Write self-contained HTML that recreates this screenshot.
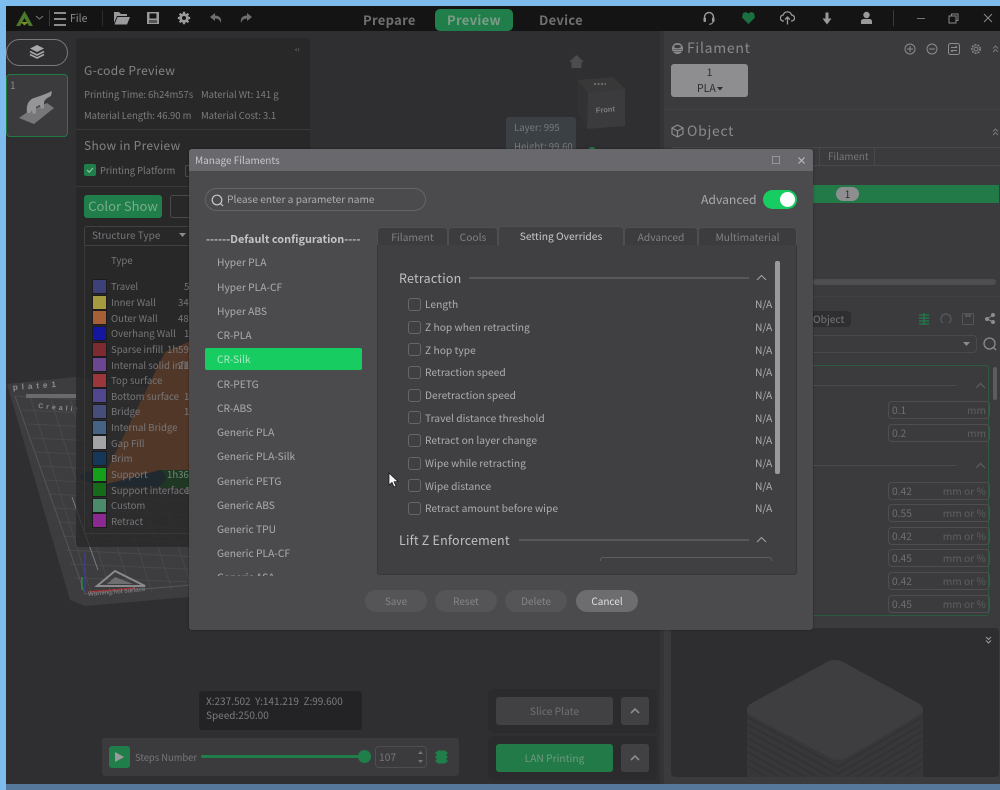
<!DOCTYPE html>
<html><head><meta charset="utf-8"><style>
html,body{margin:0;padding:0;background:#2f2f31}
#r{position:relative;width:1000px;height:790px;overflow:hidden;background:#2f2f31;font-family:"Noto Sans CJK SC","Liberation Sans",sans-serif;font-size:10px;color:#8c8c8e}
#r div{position:absolute;box-sizing:border-box}
.t{white-space:nowrap;line-height:14px}
.p{font-size:9.5px;letter-spacing:-.04px;color:#7c7c7e}
.li{left:217px;font-size:10.25px;color:#adadaf;white-space:nowrap;line-height:14px}
.o{left:425px;font-size:10.25px;color:#adadaf;white-space:nowrap;line-height:14px}
.na{left:755px;font-size:10.25px;color:#adadaf;line-height:14px}
.cb{left:408px;width:13px;height:13px;border:1px solid #666668;border-radius:3px}
.sw{left:92px;width:15px;height:15px;border:1px solid #1c1c1e}
.lg{left:111px;font-size:9.6px;color:#77777a;white-space:nowrap;line-height:14px}
.inp{left:888px;width:102px;height:18px;border:1px solid #4e4e50;border-radius:4px;font-size:10.25px;color:#6f6f71;line-height:16px;padding-left:3px}
.inp span{position:absolute;right:3px;top:0;color:#5e5e60}
.tab{top:227px;height:18px;background:#3c3c3e;border:1px solid #4f4f51;border-bottom:0;border-radius:4px 4px 0 0;font-size:10.25px;color:#818183;text-align:center;line-height:17px}
.btn{top:590px;width:62px;height:22px;background:#555557;border-radius:11px;font-size:10px;color:#858587;text-align:center;line-height:22px}
svg{position:absolute}
</style></head><body><div id="r">

<!-- window frame -->
<div style="left:0;top:0;width:1000px;height:6px;background:#7fbcee"></div>
<div style="left:0;top:0;width:6px;height:790px;background:#7fbcee"></div>
<div style="left:6px;top:6px;width:994px;height:25px;background:#141415"></div>
<div style="left:6px;top:784px;width:994px;height:6px;background:#56789a"></div>
<div style="left:0;top:784px;width:6px;height:6px;background:#7fbcee"></div>

<!-- 3D plate -->
<svg style="left:0;top:0" width="400" height="640" viewBox="0 0 400 640">
<polygon points="7,384 75,377 240,400 270,590 85,606 70,600" fill="#3d3d3f"/>
<g stroke="#49494b" stroke-width="1" fill="none">
<path d="M15,396 L230,408 M22,410 L232,420 M28,424 L234,434 M32,438 L236,448 M36,452 L238,462 M41,466 L240,476 M45,480 L242,490 M50,494 L244,504 M54,508 L246,518 M58,522 L248,532 M62,536 L250,546 M66,550 L252,560 M70,564 L254,572 M74,578 L256,584"/>
<path d="M30,396 L92,596 M50,396 L112,596 M70,398 L132,594 M90,398 L152,592 M110,400 L172,590 M130,400 L192,588"/>
</g>
<path d="M15,396 L85,594 L250,580" stroke="#555557" fill="none"/>
<path d="M72,497 L98,570" stroke="#7c7c7e" fill="none"/>
<path d="M85,553 V592" stroke="#3d3ea0" stroke-width="1.2" fill="none"/>
<path d="M82,577 v13" stroke="#2f9a40" stroke-width="1.2" fill="none"/>
<path d="M88,592 L135,588" stroke="#aa3030" stroke-width="1.2" fill="none"/>
<polygon points="115,571 97,586 145,586" fill="none" stroke="#8a8a8c" stroke-width="2"/>
<polygon points="115,577 107,584 133,584" fill="#6e6e70"/>
<text x="13" y="390" font-size="8" fill="#8e8e90" font-family="Liberation Sans" font-weight="700" letter-spacing="4" transform="rotate(-4 13 390)">plate1</text>
<text x="38" y="408" font-size="7" fill="#8e8e90" font-family="Liberation Sans" font-weight="700" letter-spacing="3" transform="rotate(5 38 408)">Crealit</text>
<rect x="26" y="394" width="50" height="4" fill="#6a6a6c"/>
<text x="88" y="596" font-size="6.5" fill="#8a8a8c" font-family="Liberation Sans" transform="rotate(-5 88 596)">Warning:hot surface</text>
<ellipse cx="140" cy="477" rx="60" ry="10" fill="#12304a"/>
<path d="M157,468 Q200,462 230,470 L230,486 Q190,490 157,487 Q175,478 157,468Z" fill="#0f6a1e"/>
<path d="M107,484 L105,474 L165,352 L240,320 L240,470 L160,470Z" fill="#c0642c"/>
</svg>

<!-- thumbnails -->
<div style="left:6px;top:39px;width:62px;height:27px;border:1px solid #7a7a7c;border-radius:14px"></div>
<svg style="left:28px;top:44px" width="18" height="17" viewBox="0 0 18 17"><path d="M9,1 L16,4.5 L9,8 L2,4.5Z" fill="#a8a8aa"/><path d="M2,7.5 L9,11 L16,7.5 M2,10.5 L9,14 L16,10.5" stroke="#a8a8aa" stroke-width="1.6" fill="none"/></svg>
<div style="left:6px;top:74px;width:62px;height:63px;background:#3b3b3d;border:1px solid #1f7a44;border-radius:4px"></div>
<div class="t" style="left:10px;top:78px;color:#8a8a8c">1</div>
<svg style="left:0;top:80px" width="70" height="50" viewBox="0 80 70 50"><polygon points="19,118 34,124 54,108 47,103 26,113" fill="#777779"/><path d="M27,113 C26,106 28,100 34,98 C40,96 46,94 52,91 L51,96 C47,98 44,100 44,103 L44,108 L41,109 L40,105 L36,107 L36,113 L33,114 L32,110 L30,113Z" fill="#959597"/></svg>

<!-- top bar -->
<svg style="left:16px;top:11px" width="17" height="15" viewBox="0 0 17 15"><path d="M8.5,0 L17,15 H13 L8.5,7 L4,15 H0Z" fill="#4a7a2a"/><path d="M4.5,11 H12.5 L8.5,14.5Z" fill="#7f8e24"/></svg>
<svg style="left:35px;top:15px" width="9" height="6"><path d="M1,1 L4.5,4 L8,1" stroke="#7c7c7e" fill="none"/></svg>
<div style="left:49px;top:10px;width:1px;height:16px;background:#3a3a3c"></div>
<div style="left:54px;top:12px;width:12px;height:1.5px;background:#8c8c8e"></div>
<div style="left:54px;top:18px;width:12px;height:1.5px;background:#8c8c8e"></div>
<div style="left:54px;top:24px;width:12px;height:1.5px;background:#8c8c8e"></div>
<div class="t" style="left:70px;top:12px;font-size:10.5px;color:#8c8c8e">File</div>
<div style="left:102px;top:10px;width:1px;height:16px;background:#2d2d2f"></div>
<svg style="left:113px;top:11px" width="18" height="14" viewBox="0 0 18 14"><path d="M1,1 h5 l2,2 h6 v2 H4 L1,12Z" fill="#9a9a9c"/><path d="M4.5,6 H17 L14,13.5 H1.5Z" fill="#9a9a9c"/></svg>
<svg style="left:146px;top:11px" width="14" height="14" viewBox="0 0 14 14"><path d="M1,1 H13 V13 H1Z" fill="#9a9a9c"/><rect x="3.5" y="2.5" width="7" height="5" fill="#141415"/><rect x="3" y="9" width="8" height="3" fill="#555"/></svg>
<svg style="left:177px;top:11px" width="14" height="14" viewBox="0 0 14 14"><circle cx="7" cy="7" r="3.6" fill="none" stroke="#9a9a9c" stroke-width="2.4"/><path d="M7,0.8 V13.2 M0.8,7 H13.2 M2.6,2.6 L11.4,11.4 M11.4,2.6 L2.6,11.4" stroke="#9a9a9c" stroke-width="2.2"/><circle cx="7" cy="7" r="2" fill="#141415"/></svg>
<svg style="left:209px;top:12px" width="14" height="12" viewBox="0 0 14 12"><path d="M6,1 L1,5 L6,9 V6.5 C9,6.5 11,8 12,11 C13,6 10,3.5 6,3.5Z" fill="#6e6e70"/></svg>
<svg style="left:239px;top:12px" width="14" height="12" viewBox="0 0 14 12"><path d="M8,1 L13,5 L8,9 V6.5 C5,6.5 3,8 2,11 C1,6 4,3.5 8,3.5Z" fill="#6e6e70"/></svg>

<div class="t" style="left:363px;top:11px;font-size:13px;font-weight:700;color:#6f6f71;line-height:18px;letter-spacing:.3px">Prepare</div>
<div style="left:435px;top:9px;width:78px;height:22px;background:#1f7e49;border-radius:5px;font-size:13px;font-weight:700;color:#7c9c88;text-align:center;line-height:22px;letter-spacing:.3px">Preview</div>
<div class="t" style="left:539px;top:11px;font-size:13px;font-weight:700;color:#6f6f71;line-height:18px;letter-spacing:.3px">Device</div>

<svg style="left:702px;top:11px" width="14" height="14" viewBox="0 0 14 14"><path d="M2.5,8 V6 a4.5,4.5 0 0 1 9,0 V8" stroke="#9a9a9c" stroke-width="1.4" fill="none"/><rect x="1.5" y="6.5" width="2.5" height="4.5" rx="1" fill="#9a9a9c"/><rect x="10" y="6.5" width="2.5" height="4.5" rx="1" fill="#9a9a9c"/><path d="M11,11 Q10,13.3 7,13.3" stroke="#9a9a9c" fill="none"/></svg>
<svg style="left:741px;top:11px" width="15" height="13" viewBox="0 0 15 13"><path d="M7.5,13 L1,6.5 L2,2 L5,1 L7.5,2.5 L10,1 L13,2 L14,6.5Z" fill="#1c6f41"/></svg>
<svg style="left:780px;top:11px" width="15" height="14" viewBox="0 0 15 14"><path d="M4,10 H3.5 a3,3 0 0 1 -.3,-6 a4.4,4.4 0 0 1 8.4,0 a3,3 0 0 1 -.1,6 H11" stroke="#9a9a9c" stroke-width="1.3" fill="none"/><path d="M7.5,13.5 V6.5 M5,8.5 L7.5,6 L10,8.5" stroke="#9a9a9c" stroke-width="1.3" fill="none"/></svg>
<svg style="left:821px;top:12px" width="12" height="13" viewBox="0 0 12 13"><path d="M4.5,0.5 h3 v6 h3 L6,12.5 L1.5,6.5 h3Z" fill="#9a9a9c"/></svg>
<svg style="left:860px;top:11px" width="13" height="14" viewBox="0 0 13 14"><circle cx="6.5" cy="4" r="3.2" fill="#9a9a9c"/><path d="M1,13 V10.5 Q1,8 4,8 H9 Q12,8 12,10.5 V13Z" fill="#9a9a9c"/></svg>
<div style="left:893px;top:10px;width:1px;height:16px;background:#3a3a3c"></div>
<div style="left:917px;top:18px;width:8px;height:1px;background:#77777a"></div>
<svg style="left:948px;top:13px" width="11" height="11"><path d="M3.5,2.5 V1 H10 V7.5 H8.5" stroke="#8a8a8c" fill="none"/><rect x="1" y="3" width="7" height="7" stroke="#8a8a8c" fill="none"/></svg>
<svg style="left:983px;top:13px" width="10" height="10"><path d="M1,1 L9,9 M9,1 L1,9" stroke="#8a8a8c"/></svg>

<!-- left panel -->
<div style="left:76px;top:38px;width:234px;height:509px;background:rgba(37,37,39,.72);border-radius:3px"></div>
<div class="t" style="left:295px;top:43px;font-size:8px;color:#77777a">‹‹</div>
<div class="t" style="left:84px;top:62px;font-size:12px;color:#838385;line-height:17px;letter-spacing:.3px">G-code Preview</div>
<div class="t p" style="left:84px;top:87px">Printing Time: 6h24m57s</div>
<div class="t p" style="left:201px;top:87px">Material Wt: 141 g</div>
<div class="t p" style="left:84px;top:108px">Material Length: 46.90 m</div>
<div class="t p" style="left:201px;top:108px">Material Cost: 3.1</div>
<div style="left:76px;top:129px;width:234px;height:1px;background:#39393b"></div>
<div class="t" style="left:84px;top:137px;font-size:12px;color:#838385;line-height:18px;letter-spacing:.3px">Show in Preview</div>
<div style="left:84px;top:164px;width:12px;height:12px;background:#1f7e49;border-radius:2px"></div>
<svg style="left:84px;top:164px" width="12" height="12"><path d="M3,6 L5.2,8.2 L9,4" stroke="#9ac4aa" stroke-width="1.1" fill="none"/></svg>
<div class="t" style="left:100px;top:163px;color:#7c7c7e;font-size:9.4px">Printing Platform</div>
<div style="left:185px;top:165px;width:12px;height:12px;border:1px solid #4a4a4c;border-radius:2px"></div>
<div style="left:76px;top:186px;width:234px;height:1px;background:#39393b"></div>
<div style="left:84px;top:195px;width:78px;height:23px;background:#1f7e49;border-radius:3px;font-size:13px;color:#7cab8e;text-align:center;line-height:21px">Color Show</div>
<div style="left:170px;top:195px;width:40px;height:23px;border:1px solid #4a4a4c;border-radius:3px"></div>
<div style="left:84px;top:226px;width:220px;height:20px;border:1px solid #414143;border-radius:3px 3px 0 0"></div>
<div class="t" style="left:92px;top:228px;font-size:10px;color:#77777a">Structure Type</div>
<svg style="left:179px;top:233px" width="7" height="5"><path d="M0,0 H7 L3.5,4Z" fill="#8a8a8c"/></svg>
<div style="left:84px;top:245px;width:220px;height:289px;border:1px solid #38383a;border-top:0"></div>
<div class="t" style="left:111px;top:253px;color:#77777a;font-size:9.6px">Type</div>

<div class="sw" style="top:279px;background:#3e4178"></div><div class="lg" style="top:279px">Travel</div><div class="lg" style="left:184px;top:279px">5</div>
<div class="sw" style="top:295px;background:#a59a40"></div><div class="lg" style="top:295px">Inner Wall</div><div class="lg" style="left:178px;top:295px">34</div>
<div class="sw" style="top:310px;background:#a65f36"></div><div class="lg" style="top:311px">Outer Wall</div><div class="lg" style="left:178px;top:311px">48</div>
<div class="sw" style="top:326px;background:#1516a0"></div><div class="lg" style="top:326px">Overhang Wall</div><div class="lg" style="left:184px;top:326px">1</div>
<div class="sw" style="top:342px;background:#7c2c30"></div><div class="lg" style="top:342px">Sparse infill</div><div class="lg" style="left:167px;top:342px">1h59</div>
<div class="sw" style="top:357px;background:#6c4690"></div><div class="lg" style="top:358px">Internal solid infill</div><div class="lg" style="left:178px;top:358px">21</div>
<div class="sw" style="top:373px;background:#9a363c"></div><div class="lg" style="top:373px">Top surface</div>
<div class="sw" style="top:388px;background:#50478e"></div><div class="lg" style="top:389px">Bottom surface</div><div class="lg" style="left:184px;top:389px">1</div>
<div class="sw" style="top:404px;background:#444e78"></div><div class="lg" style="top:404px">Bridge</div><div class="lg" style="left:184px;top:404px">1</div>
<div class="sw" style="top:420px;background:#466284"></div><div class="lg" style="top:420px">Internal Bridge</div>
<div class="sw" style="top:435px;background:#a4a4a6"></div><div class="lg" style="top:436px">Gap Fill</div>
<div class="sw" style="top:451px;background:#15385a"></div><div class="lg" style="top:451px">Brim</div>
<div class="sw" style="top:467px;background:#15a01b"></div><div class="lg" style="top:467px">Support</div><div class="lg" style="left:167px;top:467px;color:#6f8a74">1h36</div>
<div class="sw" style="top:482px;background:#176a1c"></div><div class="lg" style="top:483px">Support interface</div><div class="lg" style="left:185px;top:483px">1</div>
<div class="sw" style="top:498px;background:#4b8a6a"></div><div class="lg" style="top:498px">Custom</div>
<div class="sw" style="top:513px;background:#8a2a90"></div><div class="lg" style="top:514px">Retract</div>

<!-- view cube -->
<svg style="left:560px;top:50px" width="80" height="90" viewBox="560 50 80 90"><path d="M576.5,55 L569,62 H571.5 V68 H581.5 V62 H584Z" fill="#4c4c4e"/><polygon points="577,80 613,77 625,89 588,93" fill="#383839"/><polygon points="577,80 588,93 587,129 577,112" fill="#323234"/><polygon points="588,93 625,89 625,126 587,129" fill="#3b3b3d"/><text x="596" y="113" font-size="7.5" fill="#7c7c7e" font-weight="700" font-family="Liberation Sans" transform="rotate(-5 596 113)">Front</text><path d="M594,84 h12" stroke="#6a6a6c" stroke-width="2" stroke-dasharray="2 1.5"/></svg>
<div style="left:506px;top:117px;width:70px;height:40px;background:#3b4044;border-radius:3px"></div>
<div class="t" style="left:514px;top:120px;color:#77797b;font-size:9.6px">Layer: 995</div>
<div class="t" style="left:514px;top:139px;color:#77797b;font-size:9.6px">Height: 99.60</div>
<div style="left:588px;top:147px;width:8px;height:8px;background:#1f7e49;border-radius:4px"></div>

<!-- right panel -->
<div style="left:664px;top:31px;width:336px;height:753px;background:#3b3b3d"></div>
<div style="left:660px;top:31px;width:4px;height:753px;background:#343436"></div>
<svg style="left:671px;top:42px" width="14" height="13" viewBox="0 0 14 13"><ellipse cx="6.5" cy="6.5" rx="5.5" ry="5.5" fill="#8c8c8e"/><ellipse cx="6.5" cy="4.5" rx="3.5" ry="1.8" fill="#3b3b3d"/><path d="M2,7.5 H11 M2,9.5 H11" stroke="#3b3b3d" stroke-width=".6"/></svg>
<div class="t" style="left:687px;top:39px;font-size:14px;color:#8a8a8c;line-height:19px;letter-spacing:.7px">Filament</div>
<svg style="left:904px;top:43px" width="12" height="12"><circle cx="6" cy="6" r="5" stroke="#8c8c8e" fill="none"/><path d="M3,6 H9 M6,3 V9" stroke="#8c8c8e"/></svg>
<svg style="left:926px;top:43px" width="12" height="12"><circle cx="6" cy="6" r="5" stroke="#8c8c8e" fill="none"/><path d="M3,6 H9" stroke="#8c8c8e"/></svg>
<svg style="left:948px;top:43px" width="12" height="12"><rect x=".5" y=".5" width="11" height="11" rx="2" stroke="#8c8c8e" fill="none"/><path d="M3,4.5 H9 M7.5,3 L9,4.5 M3,7.5 H9 M3,7.5 L4.5,9" stroke="#8c8c8e" fill="none"/></svg>
<svg style="left:970px;top:43px" width="12" height="12" viewBox="0 0 12 12"><circle cx="6" cy="6" r="2" stroke="#8c8c8e" fill="none"/><circle cx="6" cy="6" r="4.2" stroke="#8c8c8e" stroke-width="1.4" fill="none" stroke-dasharray="2 1"/></svg>
<svg style="left:992px;top:45px" width="7" height="8"><path d="M1,3.5 L3.5,1 L6,3.5 M1,7 L3.5,4.5 L6,7" stroke="#77777a" fill="none"/></svg>
<div style="left:671px;top:64px;width:77px;height:33px;background:#8e8e90;border-radius:3px"></div>
<div class="t" style="left:671px;top:66px;width:77px;text-align:center;font-size:10.5px;color:#2c2c2e">1</div>
<div class="t" style="left:697px;top:82px;font-size:10.5px;color:#2c2c2e">PLA</div>
<svg style="left:717px;top:87px" width="6" height="4"><path d="M0,0 H6 L3,3.5Z" fill="#2c2c2e"/></svg>
<div style="left:664px;top:109px;width:336px;height:1px;background:#414143"></div>
<svg style="left:671px;top:124px" width="13" height="14" viewBox="0 0 13 14"><path d="M6.5,1 L12,4 V10 L6.5,13 L1,10 V4Z M1,4 L6.5,7 L12,4 M6.5,7 V13" stroke="#8c8c8e" stroke-width="1.2" fill="none"/></svg>
<div class="t" style="left:687px;top:122px;font-size:14px;color:#8a8a8c;line-height:19px;letter-spacing:.7px">Object</div>
<svg style="left:992px;top:128px" width="7" height="8"><path d="M1,3.5 L3.5,1 L6,3.5 M1,7 L3.5,4.5 L6,7" stroke="#77777a" fill="none"/></svg>
<div style="left:672px;top:147px;width:328px;height:19px;border:1px solid #48484a;border-right:0"></div>
<div style="left:819px;top:147px;width:1px;height:19px;background:#48484a"></div>
<div style="left:874px;top:147px;width:1px;height:19px;background:#48484a"></div>
<div class="t" style="left:828px;top:149px;color:#77777a;font-size:9.8px">Filament</div>
<div style="left:672px;top:185px;width:327px;height:18px;background:#217a48"></div>
<div style="left:836px;top:187px;width:23px;height:14px;background:#8e8e90;border-radius:7px;color:#2c2c2e;text-align:center;font-size:10px;line-height:14px">1</div>
<div style="left:813px;top:279px;width:183px;height:6px;background:#4e4e50;border-radius:3px"></div>
<div style="left:664px;top:296px;width:336px;height:1px;background:#414143"></div>
<div style="left:800px;top:311px;width:51px;height:16px;background:#2f2f31;border-radius:4px"></div>
<div class="t" style="left:813px;top:312px;font-size:10.25px;color:#77777a">Object</div>
<svg style="left:918px;top:313px" width="12" height="12"><path d="M1,2 H11 M1,5 H11 M1,8 H11 M1,11 H11 M6,0 V12" stroke="#1f7e49" stroke-width="1.2"/></svg>
<svg style="left:940px;top:313px" width="12" height="12"><path d="M3,10 A5,5 0 1 1 9,10" stroke="#555557" stroke-width="1.4" fill="none"/></svg>
<svg style="left:962px;top:313px" width="12" height="12"><rect x=".5" y=".5" width="11" height="11" rx="1" stroke="#555557" fill="none"/><rect x="3" y="1" width="6" height="3" fill="#555557"/></svg>
<svg style="left:984px;top:312px" width="12" height="13"><circle cx="3" cy="7" r="2" fill="#8c8c8e"/><circle cx="9" cy="3" r="2" fill="#8c8c8e"/><circle cx="9" cy="10" r="2" fill="#8c8c8e"/><path d="M3,7 L9,3 M3,7 L9,10" stroke="#8c8c8e"/></svg>
<div style="left:800px;top:335px;width:177px;height:18px;border:1px solid #4a4a4c;border-left:0;border-radius:0 4px 4px 0"></div>
<svg style="left:963px;top:342px" width="7" height="5"><path d="M0,0 H7 L3.5,4Z" fill="#8a8a8c"/></svg>
<svg style="left:983px;top:337px" width="14" height="14"><circle cx="6.5" cy="6.5" r="5.5" stroke="#8c8c8e" stroke-width="1.3" fill="none"/><path d="M10.5,10.5 L13,13" stroke="#8c8c8e" stroke-width="1.3"/></svg>
<div style="left:800px;top:365px;width:189px;height:251px;border:1px solid #2c5c40;border-left:0;border-radius:0 3px 3px 0"></div>
<div style="left:993px;top:367px;width:4px;height:33px;background:#5c5c5e;border-radius:2px"></div>
<div style="left:800px;top:385px;width:157px;height:1px;background:#4a4a4c"></div>
<svg style="left:975px;top:382px" width="11" height="7"><path d="M1,6 L5.5,1.5 L10,6" stroke="#5e5e60" stroke-width="1.2" fill="none"/></svg>
<div class="inp" style="top:401px">0.1<span>mm</span></div>
<div class="inp" style="top:424px">0.2<span>mm</span></div>
<div style="left:800px;top:465px;width:157px;height:1px;background:#4a4a4c"></div>
<svg style="left:975px;top:462px" width="11" height="7"><path d="M1,6 L5.5,1.5 L10,6" stroke="#5e5e60" stroke-width="1.2" fill="none"/></svg>
<div class="inp" style="top:482px">0.42<span>mm or %</span></div>
<div class="inp" style="top:504px">0.55<span>mm or %</span></div>
<div class="inp" style="top:527px">0.42<span>mm or %</span></div>
<div class="inp" style="top:549px">0.45<span>mm or %</span></div>
<div class="inp" style="top:572px">0.42<span>mm or %</span></div>
<div class="inp" style="top:595px">0.45<span>mm or %</span></div>

<!-- bottom-right preview -->
<div style="left:671px;top:628px;width:328px;height:149px;background:#2e2e30;border-radius:4px;overflow:hidden">
<svg style="left:0;top:0" width="328" height="149" viewBox="0 0 328 149">
<path d="M76,82 Q76,78 81,75 L156,34 Q164,30 172,34 L247,75 Q252,78 252,82 V149 H76Z" fill="#373739"/>
<path d="M76,82 Q76,78 81,75 L156,34 Q164,30 172,34 L247,75 Q252,78 252,82 Q252,85 247,88 L175,130 Q167,134 159,130 L81,88 Q76,85 76,82Z" fill="#3e3e40"/>
<g stroke="#303032" stroke-width="1" fill="none"><path d="M76,89 L167,139 L252,89 M76,96 L167,146 L252,96 M76,103 L167,153 L252,103 M76,110 L167,160 L252,110 M76,117 L167,167 L252,117 M76,124 L167,174 L252,124 M76,131 L167,181 L252,131 M76,138 L167,188 L252,138"/></g>
</svg></div>
<svg style="left:985px;top:636px" width="7" height="8"><path d="M1,1 L3.5,3.5 L6,1 M1,4.5 L3.5,7 L6,4.5" stroke="#9a9a9c" fill="none"/></svg>

<!-- right-center buttons -->
<div style="left:488px;top:689px;width:169px;height:44px;background:#2b2b2d;border-radius:6px"></div>
<div style="left:488px;top:736px;width:169px;height:44px;background:#2b2b2d;border-radius:6px"></div>
<div style="left:496px;top:697px;width:117px;height:28px;background:#414143;border-radius:3px;font-size:10.25px;color:#727274;text-align:center;line-height:28px">Slice Plate</div>
<div style="left:621px;top:697px;width:28px;height:28px;background:#414143;border-radius:3px"></div>
<svg style="left:630px;top:707px" width="10" height="7"><path d="M1,6 L5,2 L9,6" stroke="#8c8c8e" stroke-width="1.6" fill="none"/></svg>
<div style="left:496px;top:744px;width:117px;height:28px;background:#217a48;border-radius:3px;font-size:10.25px;color:#6f9a80;text-align:center;line-height:28px">LAN Printing</div>
<div style="left:621px;top:744px;width:28px;height:28px;background:#414143;border-radius:3px"></div>
<svg style="left:630px;top:754px" width="10" height="7"><path d="M1,6 L5,2 L9,6" stroke="#8c8c8e" stroke-width="1.6" fill="none"/></svg>

<!-- bottom-left -->
<div style="left:199px;top:691px;width:163px;height:39px;background:#232325;border-radius:3px"></div>
<div class="t" style="left:206px;top:694px;color:#7c7c7e">X:237.502&nbsp; Y:141.219&nbsp; Z:99.600</div>
<div class="t" style="left:206px;top:708px;color:#7c7c7e">Speed:250.00</div>
<div style="left:102px;top:738px;width:357px;height:38px;background:#3b3b3d;border-radius:3px"></div>
<div style="left:109px;top:746px;width:21px;height:22px;background:#1f7e49;border-radius:3px"></div>
<svg style="left:115px;top:752px" width="9" height="10"><path d="M0,0 L9,5 L0,10Z" fill="#9a9a9c"/></svg>
<div class="t" style="left:135px;top:750px;color:#77777a;font-size:9.4px">Steps Number</div>
<div style="left:201px;top:755px;width:164px;height:3px;background:#1f7e49;border-radius:2px"></div>
<div style="left:358px;top:750px;width:13px;height:13px;background:#1f7e49;border-radius:50%"></div>
<div style="left:375px;top:746px;width:52px;height:22px;border:1px solid #4e4e50;border-radius:4px"></div>
<div class="t" style="left:379px;top:750px;color:#77777a;font-size:10.25px">107</div>
<svg style="left:417px;top:750px" width="7" height="14"><path d="M1,4 L3.5,1 L6,4Z M1,10 L3.5,13 L6,10Z" fill="#77777a"/></svg>
<svg style="left:435px;top:750px" width="13" height="14"><path d="M3,0.5 H10 L13,3 L11,5 L13,7 L11,9 L13,11 L10,13.5 H3 L0,11 L2,9 L0,7 L2,5 L0,3Z" fill="#1f7e49"/></svg>

<!-- dialog -->
<div style="left:189px;top:149px;width:624px;height:481px;background:#4b4b4d;border-radius:3px;box-shadow:0 0 2px rgba(0,0,0,.4)"></div>
<div style="left:189px;top:149px;width:624px;height:22px;background:#69686c;border-radius:3px 3px 0 0"></div>
<div class="t" style="left:195px;top:153px;font-size:10px;color:#c8c8ca">Manage Filaments</div>
<div style="left:772px;top:156px;width:8px;height:8px;border:1px solid #97979a"></div>
<svg style="left:798px;top:157px" width="7" height="7"><path d="M.5,.5 L6.5,6.5 M6.5,.5 L.5,6.5" stroke="#c0c0c2"/></svg>

<div style="left:205px;top:188px;width:221px;height:23px;border:1px solid #656567;border-radius:12px"></div>
<svg style="left:211px;top:194px" width="13" height="13"><circle cx="6" cy="6" r="4.8" stroke="#c8c8ca" stroke-width="1.2" fill="none"/><path d="M9.5,9.5 L12,12" stroke="#c8c8ca" stroke-width="1.2"/></svg>
<div class="t" style="left:227px;top:192px;font-size:10.2px;color:#aeaeb0">Please enter a parameter name</div>
<div class="t" style="left:701px;top:191px;font-size:12.2px;color:#a9a9ab;line-height:16px">Advanced</div>
<div style="left:763px;top:190px;width:34px;height:19px;background:#17cc60;border-radius:10px"></div>
<div style="left:780px;top:192px;width:15px;height:15px;background:#fff;border-radius:50%"></div>

<div class="t" style="left:206px;top:232px;font-size:10.9px;font-weight:700;color:#c4c4c6">------Default configuration----</div>
<div class="li" style="top:255px">Hyper PLA</div>
<div class="li" style="top:280px">Hyper PLA-CF</div>
<div class="li" style="top:304px">Hyper ABS</div>
<div class="li" style="top:328px">CR-PLA</div>
<div style="left:205px;top:348px;width:157px;height:22px;background:#17cc60;border-radius:2px"></div>
<div class="li" style="top:352px;color:#aee8c4">CR-Silk</div>
<div class="li" style="top:377px">CR-PETG</div>
<div class="li" style="top:401px">CR-ABS</div>
<div class="li" style="top:425px">Generic PLA</div>
<div class="li" style="top:449px">Generic PLA-Silk</div>
<div class="li" style="top:474px">Generic PETG</div>
<div class="li" style="top:498px">Generic ABS</div>
<div class="li" style="top:522px">Generic TPU</div>
<div class="li" style="top:546px">Generic PLA-CF</div>
<div style="left:205px;top:565px;width:157px;height:10.5px;overflow:hidden"><div class="li" style="left:12px;top:5px">Generic ASA</div></div>

<div style="left:377px;top:244px;width:420px;height:331px;background:#404042;border:1px solid #363638;border-radius:0 0 3px 3px"></div>
<div class="tab" style="left:377px;width:71px">Filament</div>
<div class="tab" style="left:448px;width:50px">Cools</div>
<div style="left:498px;top:226px;width:126px;height:20px;background:#404042;border:1px solid #4f4f51;border-bottom:0;border-radius:4px 4px 0 0;font-size:10.25px;color:#c8c8ca;text-align:center;line-height:17px">Setting Overrides</div>
<div class="tab" style="left:624px;width:74px">Advanced</div>
<div class="tab" style="left:698px;width:99px">Multimaterial</div>

<div class="t" style="left:399px;top:270px;font-size:12.5px;color:#c0c0c2;line-height:16px;letter-spacing:.2px">Retraction</div>
<div style="left:469px;top:277px;width:280px;height:2px;background:#58585a"></div>
<svg style="left:756px;top:274px" width="11" height="7"><path d="M1,6 L5.5,1.5 L10,6" stroke="#a0a0a2" stroke-width="1.1" fill="none"/></svg>
<div style="left:775px;top:261px;width:5px;height:213px;background:#9a9a9c;border-radius:2px"></div>

<div class="cb" style="top:298px"></div><div class="o" style="top:297px">Length</div><div class="na" style="top:297px">N/A</div>
<div class="cb" style="top:321px"></div><div class="o" style="top:320px">Z hop when retracting</div><div class="na" style="top:320px">N/A</div>
<div class="cb" style="top:343px"></div><div class="o" style="top:343px">Z hop type</div><div class="na" style="top:343px">N/A</div>
<div class="cb" style="top:366px"></div><div class="o" style="top:365px">Retraction speed</div><div class="na" style="top:365px">N/A</div>
<div class="cb" style="top:389px"></div><div class="o" style="top:388px">Deretraction speed</div><div class="na" style="top:388px">N/A</div>
<div class="cb" style="top:411px"></div><div class="o" style="top:411px">Travel distance threshold</div><div class="na" style="top:411px">N/A</div>
<div class="cb" style="top:434px"></div><div class="o" style="top:433px">Retract on layer change</div><div class="na" style="top:433px">N/A</div>
<div class="cb" style="top:457px"></div><div class="o" style="top:456px">Wipe while retracting</div><div class="na" style="top:456px">N/A</div>
<div class="cb" style="top:479px"></div><div class="o" style="top:479px">Wipe distance</div><div class="na" style="top:479px">N/A</div>
<div class="cb" style="top:502px"></div><div class="o" style="top:501px">Retract amount before wipe</div><div class="na" style="top:501px">N/A</div>

<div class="t" style="left:399px;top:532px;font-size:12.5px;color:#c0c0c2;line-height:16px;letter-spacing:.2px">Lift Z Enforcement</div>
<div style="left:519px;top:539px;width:230px;height:2px;background:#58585a"></div>
<svg style="left:756px;top:536px" width="11" height="7"><path d="M1,6 L5.5,1.5 L10,6" stroke="#a0a0a2" stroke-width="1.1" fill="none"/></svg>
<div style="left:600px;top:557px;width:172px;height:4px;border:1px solid #5e5e60;border-bottom:0;border-radius:3px 3px 0 0"></div>

<div class="btn" style="left:365px">Save</div>
<div class="btn" style="left:435px">Reset</div>
<div class="btn" style="left:505px">Delete</div>
<div class="btn" style="left:576px;background:#6d6d70;color:#e0e0e2">Cancel</div>

<svg style="left:388px;top:472px" width="11" height="16" viewBox="0 0 11 16"><path d="M1,1 V13 L4,10.5 L6,15 L8,14 L6,9.8 L10,9.5Z" fill="#f4f4f4" stroke="#111" stroke-width=".7"/></svg>
</div></body></html>
